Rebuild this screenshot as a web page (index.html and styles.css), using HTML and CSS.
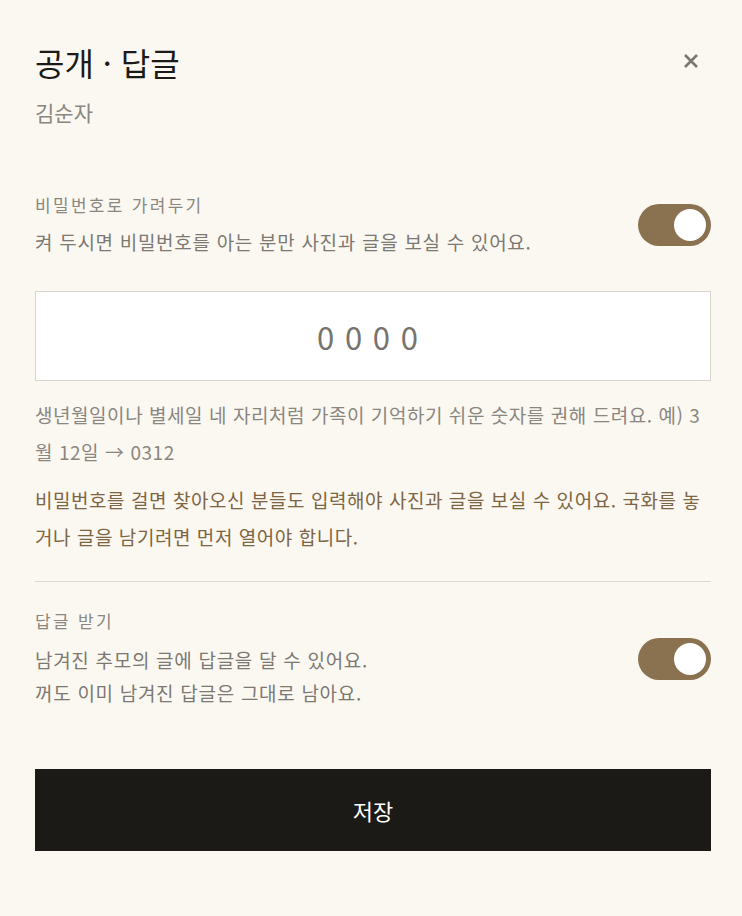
FILE: index.html
```html
<!DOCTYPE html>
<html lang="ko">
<head>
<meta charset="utf-8">
<link rel="stylesheet" href="styles.css">
</head>
<body>
<div class="sheet">
  <div class="head">
    <h1 class="title">공개 · 답글</h1>
    <button class="close" aria-label="닫기">
      <svg width="16" height="16" viewBox="0 0 16 16"><path d="M2 2L14 14M14 2L2 14" stroke="#7a7772" stroke-width="2.6" stroke-linecap="butt"/></svg>
    </button>
  </div>
  <div class="sub">김순자</div>

  <div class="row first">
    <div class="texts">
      <div class="label">비밀번호로 가려두기</div>
      <div class="desc">켜 두시면 비밀번호를 아는 분만 사진과 글을 보실 수 있어요.</div>
    </div>
    <div class="toggle"><span class="knob"></span></div>
  </div>

  <div class="pin">0 0 0 0</div>
  <p class="hint">생년월일이나 별세일 네 자리처럼 가족이 기억하기 쉬운 숫자를 권해 드려요. 예) 3월 12일 → 0312</p>
  <p class="warn">비밀번호를 걸면 찾아오신 분들도 입력해야 사진과 글을 보실 수 있어요. 국화를 놓거나 글을 남기려면 먼저 열어야 합니다.</p>

  <hr class="divider">

  <div class="row second">
    <div class="texts">
      <div class="label">답글 받기</div>
      <div class="desc tight">남겨진 추모의 글에 답글을 달 수 있어요.<br>꺼도 이미 남겨진 답글은 그대로 남아요.</div>
    </div>
    <div class="toggle"><span class="knob"></span></div>
  </div>

  <button class="save">저장</button>
</div>
</body>
</html>
```

FILE: styles.css
```css
html, body {
  margin: 0;
  padding: 0;
  background: #fbf8f2;
}
body {
  font-family: "Noto Sans CJK KR", "Noto Sans", sans-serif;
  color: #7c7872;
}
.sheet {
  padding: 42px 31px 0 35px;
  display: flex;
  flex-direction: column;
}
.head {
  display: flex;
  justify-content: space-between;
  align-items: center;
  height: 40px;
}
.title {
  margin: 0;
  font-size: 32px;
  line-height: 40px;
  font-weight: 400;
  color: #1c1a17;
  letter-spacing: 0;
}
.close {
  border: 0;
  background: none;
  padding: 0;
  width: 16px;
  height: 16px;
  margin-right: 12px;
  margin-top: -2px;
  display: flex;
}
.sub {
  margin-top: 16px;
  font-size: 21px;
  line-height: 28px;
  color: #8a8680;
}
.row {
  display: flex;
  align-items: center;
  justify-content: space-between;
}
.row.first { margin-top: 67px; }
.row.second { margin-top: 27px; }
.label {
  font-size: 17px;
  line-height: 24px;
  letter-spacing: 2.3px;
  color: #8a8680;
}
.desc {
  margin-top: 11px;
  font-size: 19px;
  line-height: 28px;
  letter-spacing: 0.7px;
  color: #7c7872;
}
.desc.tight {
  margin-top: 10px;
  line-height: 33px;
  letter-spacing: 0.7px;
}
.toggle {
  width: 73px;
  height: 42px;
  border-radius: 21px;
  background: #8a7250;
  display: flex;
  align-items: center;
  justify-content: flex-end;
  padding-right: 5px;
  box-sizing: border-box;
  flex-shrink: 0;
}
.knob {
  width: 32px;
  height: 32px;
  border-radius: 50%;
  background: #ffffff;
}
.pin {
  margin-top: 35px;
  height: 90px;
  box-sizing: border-box;
  border: 1px solid #d9d5cd;
  background: #ffffff;
  display: flex;
  align-items: center;
  justify-content: center;
  padding-right: 10px;
  font-size: 31px;
  letter-spacing: 1px;
  color: #77746f;
}
.hint {
  margin: 15px 0 0;
  font-size: 19px;
  line-height: 37px;
  letter-spacing: 0.55px;
  color: #8a8680;
}
.warn {
  margin: 11px 0 0;
  font-size: 19px;
  line-height: 37px;
  letter-spacing: 0.55px;
  color: #7e6542;
}
.divider {
  margin: 26px 0 0;
  border: 0;
  border-top: 1px solid #dcd8d0;
  height: 0;
}
.save {
  margin-top: 60px;
  height: 82px;
  border: 0;
  background: #1c1a16;
  color: #ffffff;
  font-family: "Noto Sans CJK KR", sans-serif;
  font-size: 22px;
  font-weight: 400;
}
```
